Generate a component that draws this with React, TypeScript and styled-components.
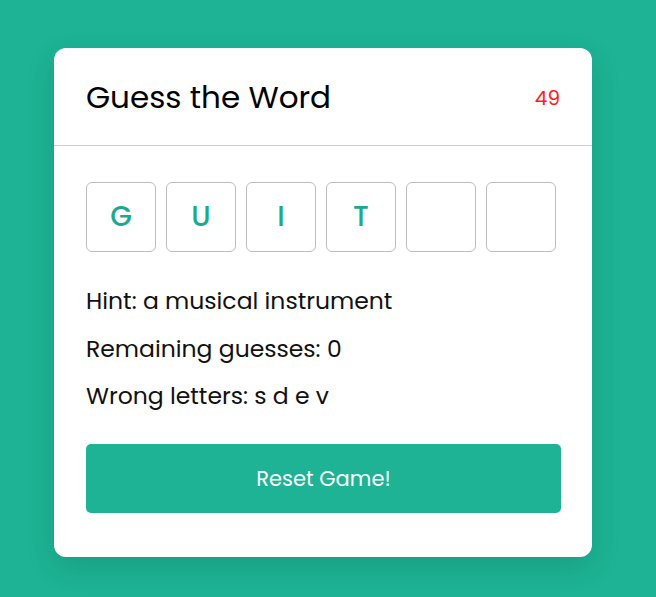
import styled, { createGlobalStyle } from 'styled-components';

const GlobalStyle = createGlobalStyle`
  html, body {
    margin: 0;
    padding: 0;
    background: #1db394;
    font-family: 'Poppins', 'Open Sans', sans-serif;
  }
  * {
    box-sizing: border-box;
  }
`;

const word = ['G', 'U', 'I', 'T', '', ''];
const wrongLetters = ['s', 'd', 'e', 'v'];

export default function App() {
  return (
    <>
      <GlobalStyle />
      <Page>
        <Card>
          <Header>
            <Title>Guess the Word</Title>
            <Timer>49</Timer>
          </Header>
          <Body>
            <LetterRow>
              {word.map((letter, i) => (
                <LetterBox key={i}>{letter}</LetterBox>
              ))}
            </LetterRow>
            <InfoList>
              <InfoLine>Hint: a musical instrument</InfoLine>
              <InfoLine>Remaining guesses: 0</InfoLine>
              <InfoLine>Wrong letters: {wrongLetters.join(' ')}</InfoLine>
            </InfoList>
            <ResetButton type="button">Reset Game!</ResetButton>
          </Body>
        </Card>
      </Page>
    </>
  );
}

const Page = styled.div`
  min-height: 597px;
  padding: 48px 0 0 54px;
`;

const Card = styled.div`
  width: 538px;
  height: 509px;
  background: #fff;
  border-radius: 12px;
  box-shadow: 0 10px 30px rgba(0, 0, 0, 0.12);
  display: flex;
  flex-direction: column;
`;

const Header = styled.header`
  height: 98px;
  padding: 2px 32px 0 32px;
  display: flex;
  align-items: center;
  justify-content: space-between;
  border-bottom: 1px solid #cfcfcf;
`;

const Title = styled.h1`
  margin: 0;
  font-size: 31px;
  font-weight: 400;
  color: #000;
`;

const Timer = styled.span`
  font-size: 20px;
  color: #ff1a1a;
`;

const Body = styled.div`
  padding: 36px 31px 0 32px;
  display: flex;
  flex-direction: column;
`;

const LetterRow = styled.div`
  display: flex;
  gap: 10px;
`;

const LetterBox = styled.div`
  width: 70px;
  height: 70px;
  border: 1px solid #bdbdbd;
  border-radius: 6px;
  display: flex;
  align-items: center;
  justify-content: center;
  font-size: 28px;
  font-weight: 500;
  color: #1aab8e;
`;

const InfoList = styled.div`
  margin-top: 32px;
  display: flex;
  flex-direction: column;
  gap: 13.5px;
`;

const InfoLine = styled.p`
  margin: 0;
  font-size: 23.5px;
  line-height: 34px;
  color: #111;
`;

const ResetButton = styled.button`
  margin-top: 31px;
  height: 69px;
  width: 475px;
  border: none;
  border-radius: 5px;
  background: #1db394;
  color: #fff;
  font-family: inherit;
  font-size: 21px;
  cursor: pointer;
`;
